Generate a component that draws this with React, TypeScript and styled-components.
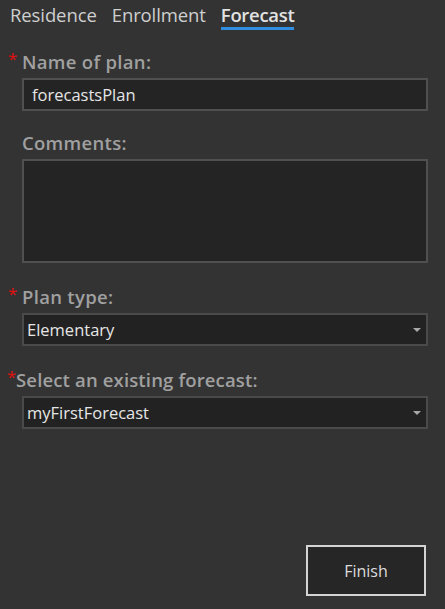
import React from "react";
import styled, { createGlobalStyle } from "styled-components";

const Global = createGlobalStyle`
  html, body {
    margin: 0;
    padding: 0;
    background: #333333;
    font-family: "Open Sans", "Noto Sans", sans-serif;
  }
`;

const Page = styled.div`
  width: 445px;
  height: 609px;
  box-sizing: border-box;
  display: flex;
  flex-direction: column;
  background: #333333;
  padding: 0 17px 0 0;
`;

const Tabs = styled.div`
  display: flex;
  gap: 15px;
  padding: 2px 0 0 10px;
  height: 29px;
`;

const Tab = styled.div<{ $active?: boolean }>`
  font-size: 18.5px;
  line-height: 25px;
  color: ${(p) => (p.$active ? "#e2e2e2" : "#cfcfcf")};
  font-weight: ${(p) => (p.$active ? 600 : 400)};
  border-bottom: 3px solid ${(p) => (p.$active ? "#2f8ee0" : "transparent")};
  height: 25px;
  letter-spacing: ${(p) => (p.$active ? "-0.3px" : "-0.1px")};
`;

const Form = styled.div`
  display: flex;
  flex-direction: column;
  padding-left: 22px;
  margin-top: 19px;
`;

const Field = styled.div<{ $gap?: number }>`
  display: flex;
  flex-direction: column;
  margin-bottom: ${(p) => p.$gap ?? 22}px;
`;

const Label = styled.div<{ $tight?: boolean }>`
  position: relative;
  font-size: 18.5px;
  font-weight: 600;
  color: #a0a0a0;
  line-height: 24px;
  margin-left: ${(p) => (p.$tight ? "-6px" : "0")};
  margin-bottom: 4px;
  letter-spacing: ${(p) => (p.$tight ? "0.15px" : "0.3px")};
`;

const Star = styled.span<{ $tight?: boolean }>`
  position: absolute;
  left: ${(p) => (p.$tight ? "-9px" : "-14px")};
  top: -3px;
  color: #e01010;
  font-size: 17px;
  font-weight: 400;
`;

const TextBox = styled.div`
  box-sizing: border-box;
  height: 33px;
  border: 2px solid #505050;
  background: #242424;
  color: #e6e6e6;
  font-size: 16.5px;
  line-height: 29px;
  padding-left: 8px;
`;

const Area = styled.div`
  box-sizing: border-box;
  height: 104px;
  border: 2px solid #505050;
  background: #242424;
`;

const Select = styled.div`
  box-sizing: border-box;
  height: 33px;
  border: 2px solid #4a4a4a;
  background: #222222;
  color: #e6e6e6;
  font-size: 16.5px;
  line-height: 29px;
  padding: 0 5px 0 3px;
  display: flex;
  justify-content: space-between;
  align-items: center;
`;

const Arrow = styled.span`
  width: 0;
  height: 0;
  border-left: 4px solid transparent;
  border-right: 4px solid transparent;
  border-top: 4px solid #a8a8a8;
`;

const Footer = styled.div`
  margin-top: auto;
  display: flex;
  justify-content: flex-end;
  padding: 0 2px 13px 0;
`;

const Button = styled.button`
  width: 120px;
  height: 51px;
  box-sizing: border-box;
  border: 2px solid #d4d4d4;
  background: #262626;
  color: #dcdcdc;
  font-family: inherit;
  font-size: 16px;
`;

export default function App() {
  return (
    <Page>
      <Global />
      <Tabs>
        <Tab>Residence</Tab>
        <Tab>Enrollment</Tab>
        <Tab $active>Forecast</Tab>
      </Tabs>
      <Form>
        <Field $gap={20}>
          <Label>
            <Star>*</Star>Name of plan:
          </Label>
          <TextBox>forecastsPlan</TextBox>
        </Field>
        <Field>
          <Label>Comments:</Label>
          <Area />
        </Field>
        <Field>
          <Label>
            <Star>*</Star>Plan type:
          </Label>
          <Select>
            Elementary
            <Arrow />
          </Select>
        </Field>
        <Field>
          <Label $tight>
            <Star $tight>*</Star>Select an existing forecast:
          </Label>
          <Select>
            myFirstForecast
            <Arrow />
          </Select>
        </Field>
      </Form>
      <Footer>
        <Button>Finish</Button>
      </Footer>
    </Page>
  );
}
